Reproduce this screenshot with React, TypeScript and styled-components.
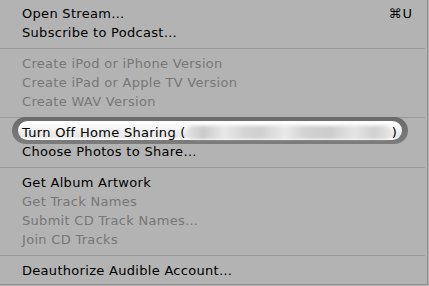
import styled, { createGlobalStyle } from "styled-components";

const GlobalStyle = createGlobalStyle`
    html, body {
        margin: 0;
        padding: 0;
        background: #b3b3b3;
    }
`;

const Menu = styled.div`
    width: 428px;
    height: 285px;
    box-sizing: border-box;
    padding-top: 4px;
    background: #b3b3b3;
    border-right: 1px solid #8e8e8e;
    border-bottom: 1px solid #8e8e8e;
    font-family: "DejaVu Sans", "Liberation Sans", sans-serif;
    font-size: 13px;
    letter-spacing: 0.3px;
    display: flex;
    flex-direction: column;
`;

const Item = styled.div<{ $disabled?: boolean }>`
    position: relative;
    height: 19px;
    display: flex;
    align-items: center;
    justify-content: space-between;
    padding: 0 14px 0 22px;
    color: ${(props) => (props.$disabled ? "#777777" : "#000000")};
    white-space: nowrap;
`;

const Label = styled.span`
    position: relative;
    z-index: 1;
    display: flex;
    align-items: center;
`;

const Shortcut = styled.span`
    font-size: 13px;
    letter-spacing: 1px;
`;

const Separator = styled.div`
    height: 12px;
    display: flex;
    align-items: center;
    &::after {
        content: "";
        flex: 1;
        margin-right: 2px;
        height: 1px;
        background: #999999;
    }
`;

const Pill = styled.div`
    position: absolute;
    left: 12px;
    right: 19px;
    top: -6px;
    bottom: -2px;
    border-radius: 14px;
    background: linear-gradient(#6a6a6a, #7c7c7c);
    padding: 4px 6px;
    box-sizing: border-box;
    &::after {
        content: "";
        display: block;
        height: 100%;
        border-radius: 10px;
        background: linear-gradient(#ffffff 0%, #f4f4f4 40%, #e6e6e6 80%, #ffffff 100%);
    }
`;

const Blurred = styled.span`
    display: inline-block;
    width: 204px;
    height: 13px;
    margin: 0 1px;
    border-radius: 6px;
    background: linear-gradient(
        90deg,
        #e2e2e2 0%,
        #c9c9c9 8%,
        #e8e8e8 18%,
        #d4d4d4 28%,
        #cfcfcf 36%,
        #e9e9e9 48%,
        #d2d2d2 58%,
        #cccccc 70%,
        #e4e4e4 82%,
        #d0d0d0 92%,
        #e6e6e6 100%
    );
    filter: blur(1.5px);
`;

type Row = { label: string; disabled?: boolean; shortcut?: string } | "sep";

const rows: Row[] = [
    { label: "Open Stream…", shortcut: "⌘U" },
    { label: "Subscribe to Podcast…" },
    "sep",
    { label: "Create iPod or iPhone Version", disabled: true },
    { label: "Create iPad or Apple TV Version", disabled: true },
    { label: "Create WAV Version", disabled: true },
    "sep",
];

const rowsAfter: Row[] = [
    { label: "Choose Photos to Share…" },
    "sep",
    { label: "Get Album Artwork" },
    { label: "Get Track Names", disabled: true },
    { label: "Submit CD Track Names…", disabled: true },
    { label: "Join CD Tracks", disabled: true },
    "sep",
    { label: "Deauthorize Audible Account…" },
];

function renderRows(list: Row[]) {
    return list.map((row, i) =>
        row === "sep" ? (
            <Separator key={i} />
        ) : (
            <Item key={i} $disabled={row.disabled}>
                <Label>{row.label}</Label>
                {row.shortcut && <Shortcut>{row.shortcut}</Shortcut>}
            </Item>
        )
    );
}

export default function App(): JSX.Element {
    return (
        <>
            <GlobalStyle />
            <Menu>
                {renderRows(rows)}
                <Item>
                    <Pill />
                    <Label>
                        Turn Off Home Sharing (<Blurred />)
                    </Label>
                </Item>
                {renderRows(rowsAfter)}
            </Menu>
        </>
    );
}
